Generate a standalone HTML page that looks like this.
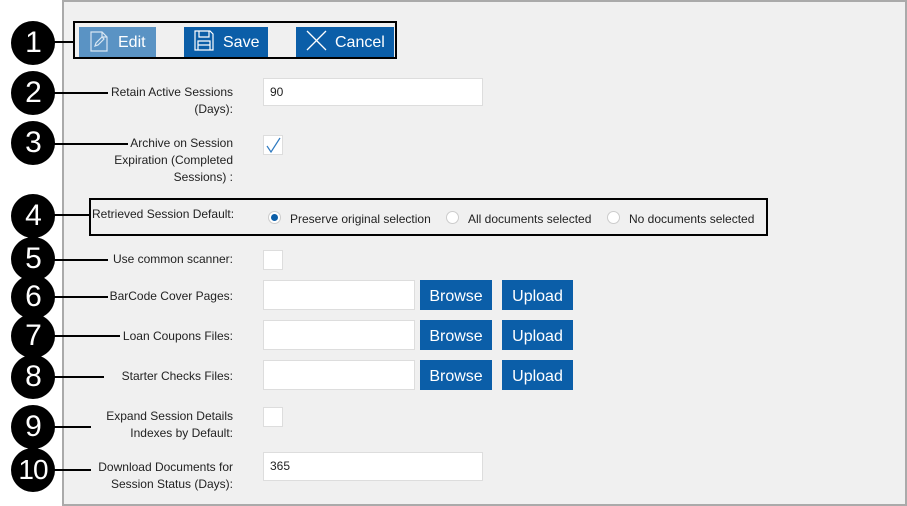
<!DOCTYPE html>
<html><head><meta charset="utf-8"><style>
body{margin:0;width:907px;height:506px;background:#fff;position:relative;overflow:hidden;font-family:"Liberation Sans",sans-serif;}
.a{position:absolute}
.panel{left:62px;top:0;width:841px;height:502px;background:#f0f0f0;border:2px solid #aaa}
.c{width:44px;height:44px;border-radius:50%;background:#000;color:#fff;font-size:30px;line-height:44px;text-align:center;left:11px;letter-spacing:-1px}
.ln{height:2px;background:#000;left:50px}
.lb{font-size:12px;color:#222;text-align:right;width:200px;left:33px;line-height:17px}
.in{background:#fff;border:1px solid #ddd;box-sizing:border-box;font-size:12px;padding-left:6px;color:#222}
.btn{background:#0b5ea8;color:#fff;font-size:16px;text-align:center;line-height:33px;height:30px}
.tb{color:#fff;font-size:16px;line-height:32px;height:30px;top:27px}
.rd{width:11px;height:11px;border-radius:50%;border:1px solid #ccc;background:#fff;top:211px}
.rt{font-size:12px;color:#222;top:212px}
</style></head><body>
<div class="a panel"></div>

<div class="a" style="left:73px;top:21px;width:320px;height:34px;border:2px solid #000"></div>
<div class="a tb" style="left:79px;width:77px;background:#5a93c4"></div>
<svg class="a" style="left:90px;top:31px" width="18" height="21" viewBox="0 0 18 21"><path d="M1 1h11l5 5v14H1z M12 1v5h5" fill="none" stroke="#d8e6f2" stroke-width="1.2"/><path d="M5 15l1-3 6-6 2 2-6 6z" fill="none" stroke="#d8e6f2" stroke-width="1.2"/></svg>
<div class="a tb" style="left:118px;">Edit</div>
<div class="a tb" style="left:184px;width:84px;background:#0b5ea8"></div>
<svg class="a" style="left:194px;top:30px" width="20" height="21" viewBox="0 0 20 21"><path d="M1 1h15l3 3v16H1z M5 1v6h10V1 M4 11h12v9H4z M4 15h12" fill="none" stroke="#fff" stroke-width="1.2"/></svg>
<div class="a tb" style="left:223px;">Save</div>
<div class="a tb" style="left:296px;width:98px;background:#0b5ea8"></div>
<svg class="a" style="left:306px;top:30px" width="21" height="21"><path d="M1 1L20 20M20 1L1 20" stroke="#fff" stroke-width="1.3"/></svg>
<div class="a tb" style="left:335px;">Cancel</div>

<div class="a c" style="top:21px">1</div><div class="a ln" style="top:41px;width:23px"></div>
<div class="a c" style="top:71px">2</div><div class="a ln" style="top:92px;width:58px"></div>
<div class="a c" style="top:121px">3</div><div class="a ln" style="top:143px;width:78px"></div>
<div class="a c" style="top:194px">4</div><div class="a ln" style="top:214px;width:40px"></div>
<div class="a c" style="top:237px">5</div><div class="a ln" style="top:259px;width:58px"></div>
<div class="a c" style="top:275px">6</div><div class="a ln" style="top:296px;width:58px"></div>
<div class="a c" style="top:314px">7</div><div class="a ln" style="top:335px;width:70px"></div>
<div class="a c" style="top:355px">8</div><div class="a ln" style="top:376px;width:54px"></div>
<div class="a c" style="top:405px">9</div><div class="a ln" style="top:426px;width:41px"></div>
<div class="a c" style="top:448px;font-size:28px">10</div><div class="a ln" style="top:469px;width:41px"></div>

<div class="a lb" style="top:84px">Retain Active Sessions<br>(Days):</div>
<div class="a in" style="left:263px;top:78px;width:220px;height:28px;line-height:26px">90</div>
<div class="a lb" style="top:135px">Archive on Session<br>Expiration (Completed<br>Sessions) :</div>
<div class="a in" style="left:263px;top:135px;width:20px;height:20px"></div>
<svg class="a" style="left:265px;top:136px" width="17" height="18"><path d="M2 10l4 6 9-14" fill="none" stroke="#2f7ac0" stroke-width="1.2"/></svg>

<div class="a" style="left:89px;top:198px;width:675px;height:34px;border:2px solid #000"></div>
<div class="a" style="left:92px;top:207px;font-size:12px;color:#222">Retrieved Session Default:</div>
<div class="a rd" style="left:268px;border-color:#ccc"></div><div class="a" style="left:271px;top:214px;width:7px;height:7px;border-radius:50%;background:#0b5ea8"></div>
<div class="a rt" style="left:290px">Preserve original selection</div>
<div class="a rd" style="left:446px"></div><div class="a rt" style="left:468px">All documents selected</div>
<div class="a rd" style="left:607px"></div><div class="a rt" style="left:629px">No documents selected</div>

<div class="a lb" style="top:251px">Use common scanner:</div>
<div class="a in" style="left:263px;top:250px;width:20px;height:20px"></div>

<div class="a lb" style="top:288px">BarCode Cover Pages:</div>
<div class="a in" style="left:263px;top:280px;width:152px;height:30px"></div>
<div class="a btn" style="left:420px;top:280px;width:72px">Browse</div>
<div class="a btn" style="left:502px;top:280px;width:71px">Upload</div>
<div class="a lb" style="top:328px">Loan Coupons Files:</div>
<div class="a in" style="left:263px;top:320px;width:152px;height:30px"></div>
<div class="a btn" style="left:420px;top:320px;width:72px">Browse</div>
<div class="a btn" style="left:502px;top:320px;width:71px">Upload</div>
<div class="a lb" style="top:368px">Starter Checks Files:</div>
<div class="a in" style="left:263px;top:360px;width:152px;height:30px"></div>
<div class="a btn" style="left:420px;top:360px;width:72px">Browse</div>
<div class="a btn" style="left:502px;top:360px;width:71px">Upload</div>

<div class="a lb" style="top:408px">Expand Session Details<br>Indexes by Default:</div>
<div class="a in" style="left:263px;top:407px;width:20px;height:20px"></div>
<div class="a lb" style="top:459px">Download Documents for<br>Session Status (Days):</div>
<div class="a in" style="left:263px;top:452px;width:220px;height:29px;line-height:27px">365</div>
</body></html>
